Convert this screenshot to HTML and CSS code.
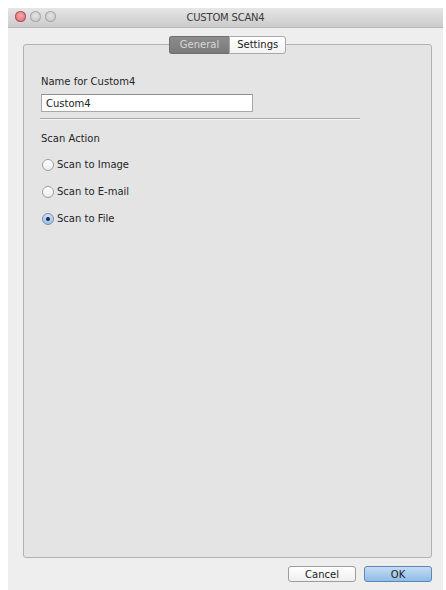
FILE: index.html
```html
<!DOCTYPE html>
<html lang="en">
<head>
  <meta charset="UTF-8">
  <title>CUSTOM SCAN4</title>
  <link rel="stylesheet" href="styles.css">
</head>
<body>

<div class="window">
  <!-- Title Bar -->
  <div class="titlebar">
    <div class="lights">
      <span class="light close"></span>
      <span class="light"></span>
      <span class="light"></span>
    </div>
    <div class="title">CUSTOM SCAN4</div>
  </div>

  <div class="content">
    <!-- Tab Box -->
    <div class="tabbox">
      <div class="tabs">
        <span class="tab active">General</span>
        <span class="tab">Settings</span>
      </div>

      <div class="pane">
        <label class="field-label" for="customName">Name for Custom4</label>
        <input class="text-field" id="customName" type="text" value="Custom4">
        <div class="separator"></div>

        <div class="group-label">Scan Action</div>
        <div class="radios">
          <label class="radio"><span class="dot"></span>Scan to Image</label>
          <label class="radio"><span class="dot"></span>Scan to E-mail</label>
          <label class="radio checked"><span class="dot"></span>Scan to File</label>
        </div>
      </div>
    </div>

    <!-- Dialog Buttons -->
    <div class="buttons">
      <button class="btn">Cancel</button>
      <button class="btn default">OK</button>
    </div>
  </div>
</div>

</body>
</html>
```

FILE: styles.css
```css
/* Global Styling */
body, html {
  margin: 0;
  background: #fff;
  font-family: 'DejaVu Sans', sans-serif;
  color: #2a2a2a;
}

body {
  padding: 8px 3px 0 8px;
}

/* Window */
.window {
  background: #eeeeee;
  height: 582px;
  display: flex;
  flex-direction: column;
}

.titlebar {
  height: 19px;
  background: linear-gradient(#e6e6e6, #cbcbcb);
  border-bottom: 1px solid #b8b8b8;
  position: relative;
  display: flex;
  align-items: center;
  justify-content: center;
}

.lights {
  position: absolute;
  left: 7px;
  top: 3px;
  display: flex;
  gap: 4px;
}

.light {
  width: 11px;
  height: 11px;
  border-radius: 50%;
  background: radial-gradient(circle at 50% 40%, #e4e4e4, #bdbdbd);
  box-shadow: inset 0 0 0 1px #a8a8a8;
}

.light.close {
  background: radial-gradient(circle at 50% 40%, #f4a8ab, #d9646e);
  box-shadow: inset 0 0 0 1px #b0535e;
}

.title {
  font-size: 10px;
  color: #3a3a3a;
  letter-spacing: -0.2px;
}

/* Content */
.content {
  flex: 1;
  padding: 16px 11px 0 15px;
  display: flex;
  flex-direction: column;
}

.tabbox {
  height: 512px;
  border: 1px solid #b2b2b2;
  border-radius: 3px;
  background: #e4e4e4;
}

.tabs {
  display: flex;
  justify-content: center;
  margin-top: -9px;
}

.tab {
  height: 16px;
  line-height: 16px;
  padding: 0 7px;
  font-size: 10px;
  background: linear-gradient(#ffffff, #f2f2f2);
  border: 1px solid #a9a9a9;
  color: #222;
}

.tab:first-child {
  border-radius: 3px 0 0 3px;
  border-right: none;
  padding: 0 10px;
}

.tab:last-child {
  border-radius: 0 3px 3px 0;
}

.tab.active {
  background: linear-gradient(#8c8c8c, #7a7a7a);
  border-color: #6e6e6e;
  color: #d8d8d8;
}

/* Pane */
.pane {
  padding: 21px 0 0 17px;
  display: flex;
  flex-direction: column;
  align-items: flex-start;
}

.field-label, .group-label {
  font-size: 10px;
  line-height: 14px;
  color: #262626;
}

.text-field {
  margin-top: 5px;
  width: 212px;
  height: 18px;
  box-sizing: border-box;
  border: 1px solid #a8a8a8;
  border-top-color: #8e8e8e;
  background: #fff;
  font-family: 'DejaVu Sans', sans-serif;
  font-size: 10px;
  color: #222;
  padding: 0 4px;
  outline: none;
}

.separator {
  margin: 6px 0 0 -1px;
  width: 320px;
  height: 1px;
  background: #a9a9a9;
  border-bottom: 1px solid #f4f4f4;
}

.group-label {
  margin-top: 12px;
}

.radios {
  margin-top: 12px;
  display: flex;
  flex-direction: column;
  gap: 13px;
}

.radio {
  display: flex;
  align-items: center;
  gap: 3px;
  font-size: 10px;
  line-height: 14px;
  color: #262626;
  margin-left: 1px;
}

.dot {
  width: 12px;
  height: 12px;
  box-sizing: border-box;
  border-radius: 50%;
  border: 1px solid #9d9d9d;
  background: linear-gradient(#ffffff, #ececec);
  display: flex;
  align-items: center;
  justify-content: center;
}

.radio.checked .dot {
  border-color: #6c8fb8;
  background: linear-gradient(#cfe1f5, #9cc0e6);
}

.radio.checked .dot::after {
  content: "";
  width: 4px;
  height: 4px;
  border-radius: 50%;
  background: #1e2a3a;
}

/* Buttons */
.buttons {
  display: flex;
  justify-content: flex-end;
  gap: 8px;
  margin-top: 8px;
}

.btn {
  width: 68px;
  height: 16px;
  padding: 0;
  font-family: 'DejaVu Sans', sans-serif;
  font-size: 10px;
  color: #222;
  border: 1px solid #9c9c9c;
  border-radius: 3px;
  background: linear-gradient(#ffffff, #efefef);
}

.btn.default {
  border-color: #5d86b5;
  background: linear-gradient(#c4dcf3, #8fbce8);
}
```
